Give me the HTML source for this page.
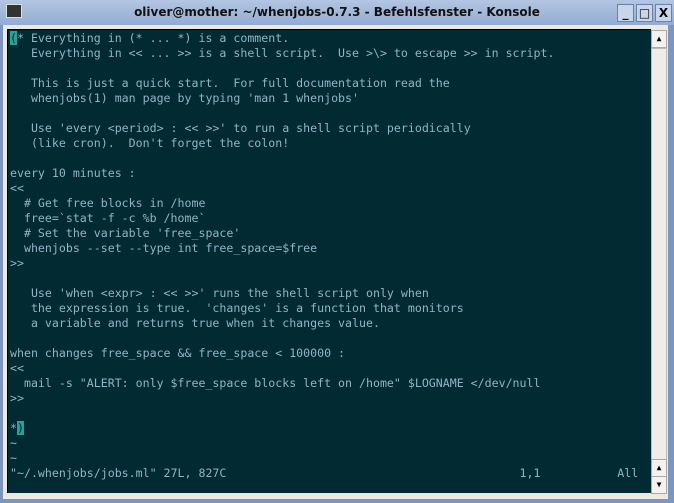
<!DOCTYPE html><html><head><style>
body{margin:0;width:674px;height:503px;overflow:hidden;background:#7d96c0;font-family:"DejaVu Sans Mono",monospace}
#title{position:absolute;left:0;top:0;width:674px;height:25px;background:linear-gradient(#b3c6e2,#93acd2);}
#title .t{position:absolute;left:0;width:674px;top:5px;text-align:center;font:bold 12px "DejaVu Sans",sans-serif;color:#111}
.btn{position:absolute;top:4px;width:15px;height:16px;border:1px solid #6a82aa;background:#c8d6ea;font:bold 12px "DejaVu Sans",sans-serif;text-align:center;line-height:16px;color:#000}
#frame{position:absolute;left:3px;top:25px;width:665px;height:474px;background:#ece9e3}
#term{position:absolute;left:7px;top:29px;width:643px;height:463px;background:#012a33;border-left:1px solid #000;border-top:1px solid #000}
pre{margin:0;position:absolute;left:2px;top:1px;font:11.6px/15px "DejaVu Sans Mono",monospace;color:#93b3c6}
.c{background:#2aa198;color:#012a33}
#sb{position:absolute;left:651px;top:29px;width:15px;height:463px;background:#ece9e3}
.ar{position:absolute;left:651px;width:14px;height:16px;border:1px solid #aaa;background:#f4f2ee;font-size:8px;text-align:center;line-height:16px;color:#000}
</style></head><body>
<div id="title"><div style="position:absolute;left:6px;top:4px;width:14px;height:12px;background:#333;border:1px solid #ddd"></div><div class="t">oliver@mother: ~/whenjobs-0.7.3 - Befehlsfenster - Konsole</div>
<div class="btn" style="left:617px">_</div><div class="btn" style="left:636px">□</div><div class="btn" style="left:655px">X</div></div>
<div id="frame"></div>
<div id="term"><pre><span class="c">(</span>* Everything in (* ... *) is a comment.
   Everything in &lt;&lt; ... &gt;&gt; is a shell script.  Use &gt;\&gt; to escape &gt;&gt; in script.

   This is just a quick start.  For full documentation read the
   whenjobs(1) man page by typing 'man 1 whenjobs'

   Use 'every &lt;period&gt; : &lt;&lt; &gt;&gt;' to run a shell script periodically
   (like cron).  Don't forget the colon!

every 10 minutes :
&lt;&lt;
  # Get free blocks in /home
  free=`stat -f -c %b /home`
  # Set the variable 'free_space'
  whenjobs --set --type int free_space=$free
&gt;&gt;

   Use 'when &lt;expr&gt; : &lt;&lt; &gt;&gt;' runs the shell script only when
   the expression is true.  'changes' is a function that monitors
   a variable and returns true when it changes value.

when changes free_space &amp;&amp; free_space &lt; 100000 :
&lt;&lt;
  mail -s "ALERT: only $free_space blocks left on /home" $LOGNAME &lt;/dev/null
&gt;&gt;

*<span class="c">)</span>
~
~
"~/.whenjobs/jobs.ml" 27L, 827C                                          1,1           All</pre></div>
<div id="sb"></div>
<div class="ar" style="top:30px">▲</div>
<div style="position:absolute;left:651px;top:48px;width:14px;height:410px;border:1px solid #bbb;background:#efede8"></div>
<div class="ar" style="top:459px">▲</div><div class="ar" style="top:476px">▼</div>
</body></html>
